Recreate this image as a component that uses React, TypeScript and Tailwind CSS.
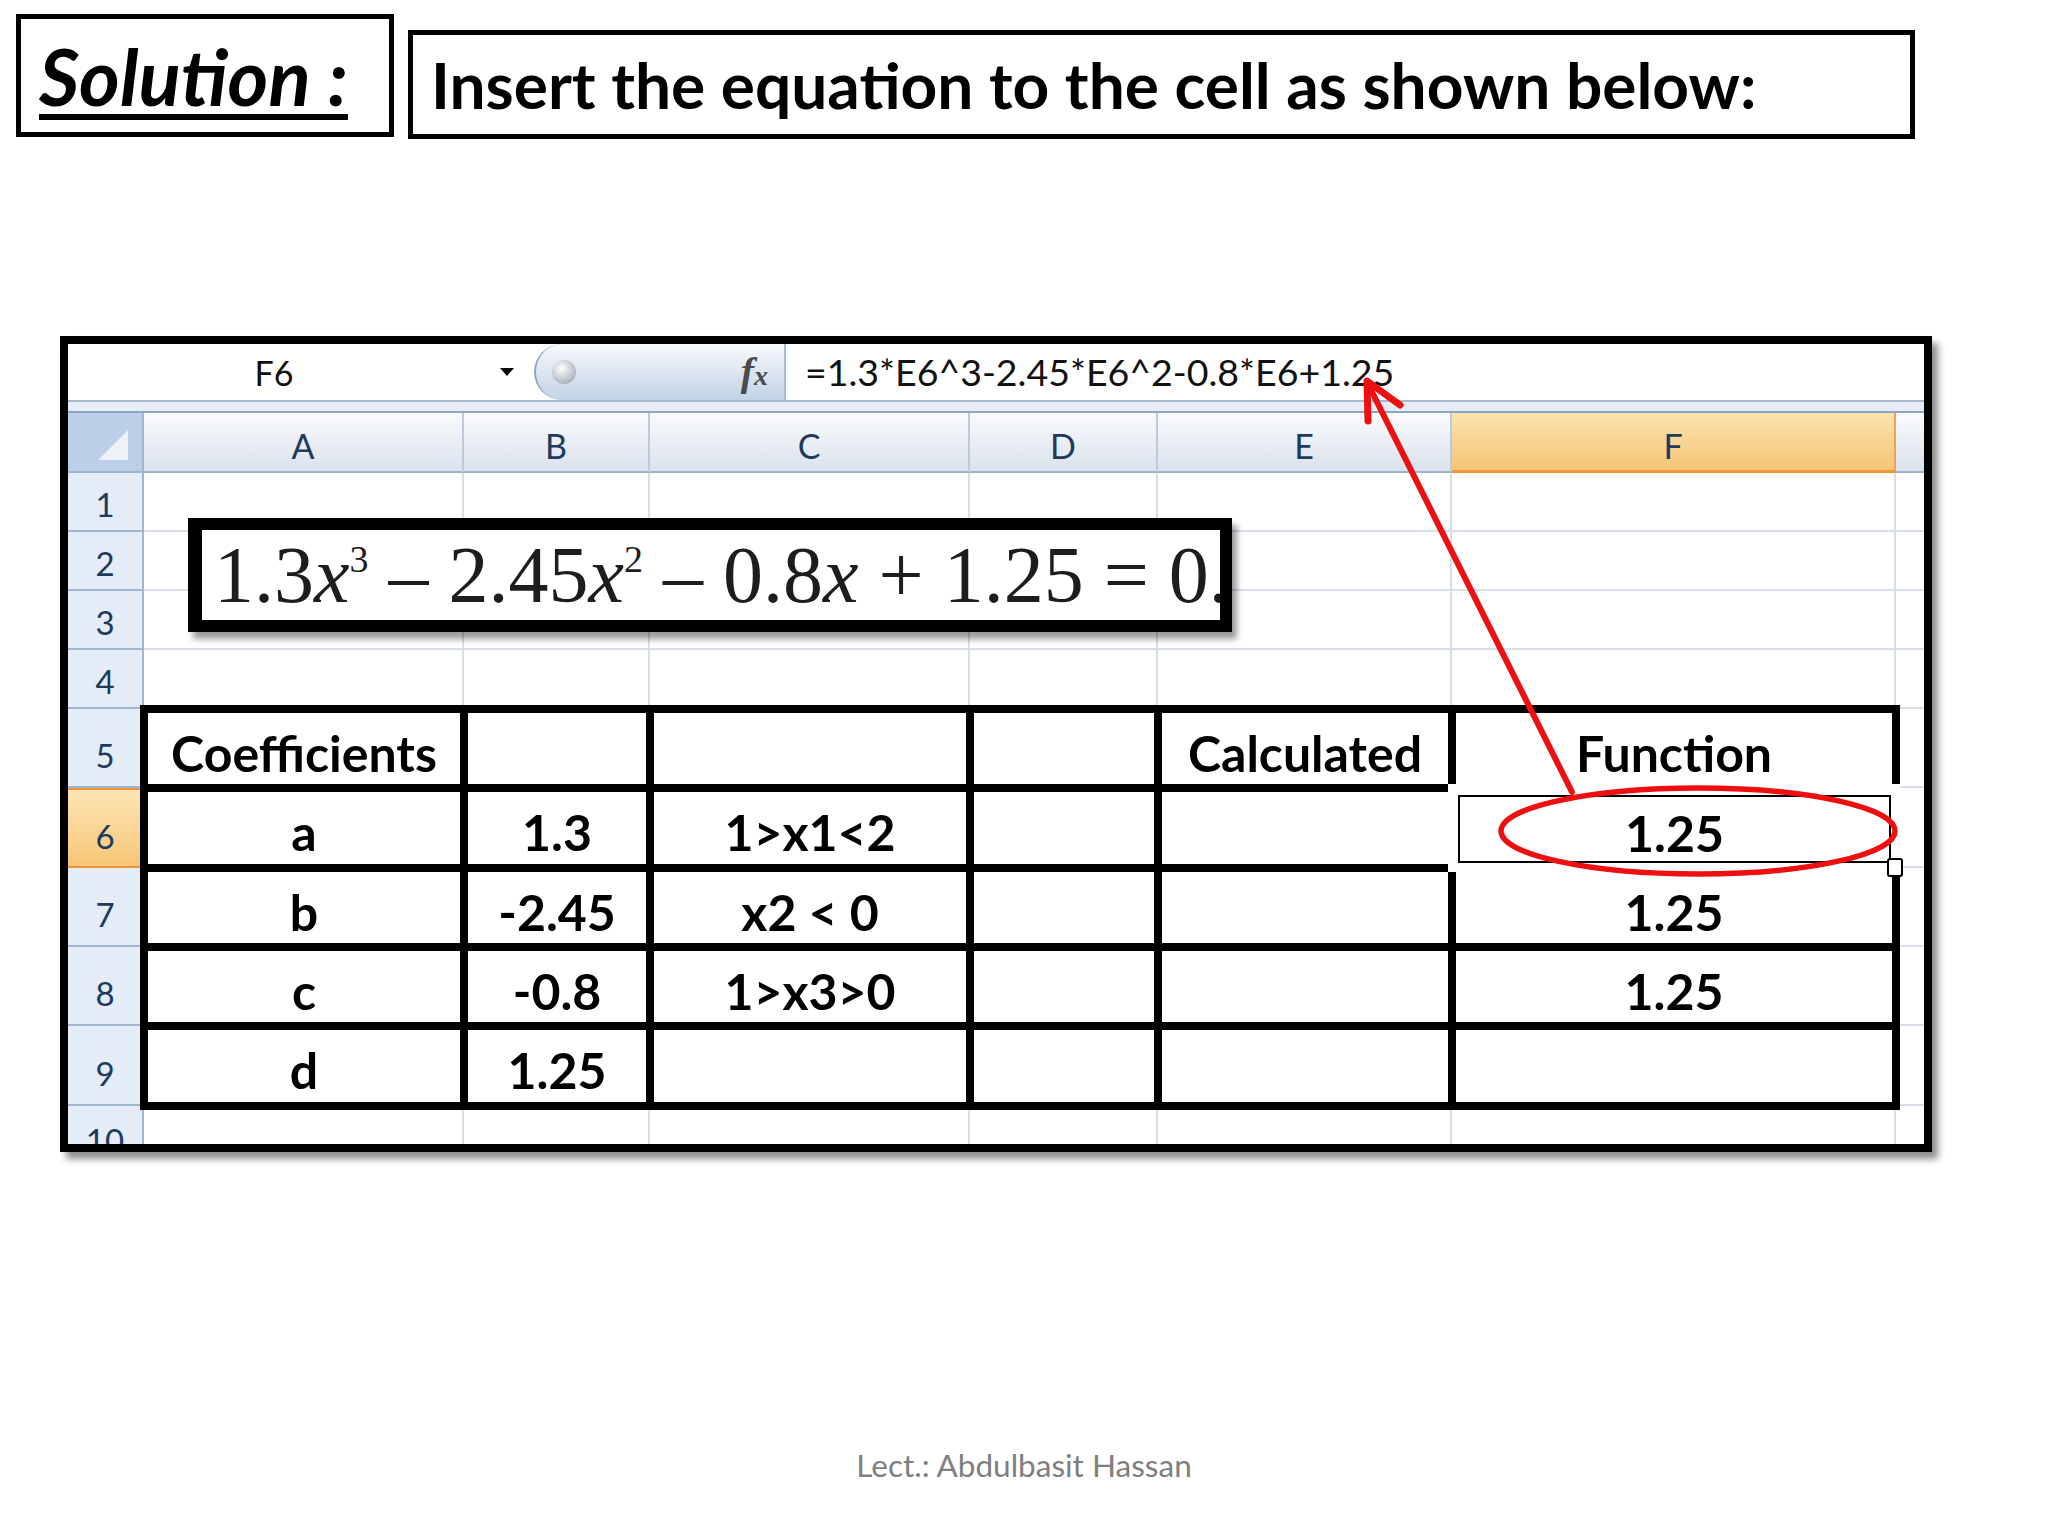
import React from "react";

const COLS = ["A", "B", "C", "D", "E", "F"];

const TABLE: string[][] = [
  ["Coefficients", "", "", "", "Calculated", "Function"],
  ["a", "1.3", "1>x1<2", "", "", "__F6__"],
  ["b", "-2.45", "x2 < 0", "", "", "1.25"],
  ["c", "-0.8", "1>x3>0", "", "", "1.25"],
  ["d", "1.25", "", "", "", ""],
];

const hdrCell =
  "flex items-center justify-center pt-[8px] border-r-2 border-b-2 border-r-[#bccadb] border-b-[#9db3cc] bg-linear-to-b from-[#fafbfd] to-[#dae2ec] text-[34px] leading-none text-[#1e3a5c]";
const hdrCellF =
  "flex items-center justify-center pt-[8px] border-r-2 border-b-[3px] border-r-[#f0a04e] border-b-[#f29436] bg-linear-to-b from-[#fbe3b0] to-[#f5c575] text-[34px] leading-none text-[#1e3a5c]";
const rowHdrSmall =
  "flex items-center justify-center pt-[6px] bg-[#e4ecf7] border-r-2 border-b-2 border-[#9eb6ce] text-[33px] leading-none text-[#1e3a5c]";
const rowHdrTall =
  "flex items-center justify-center pt-[16px] bg-[#e4ecf7] border-r-2 border-b-2 border-[#9eb6ce] text-[33px] leading-none text-[#1e3a5c]";
const rowHdrSel =
  "flex items-center justify-center pt-[16px] bg-linear-to-b from-[#fde5b4] to-[#f7c677] border-r-2 border-y-2 border-[#f29436] text-[33px] leading-none text-[#1e3a5c]";
const dataCell = "border-r-2 border-b-2 border-[#d9dfe9]";

function SheetRow({ n, table }: { n: number; table: boolean }) {
  const cls = n === 6 ? rowHdrSel : n >= 5 ? rowHdrTall : rowHdrSmall;
  return (
    <>
      <div className={cls}>{n}</div>
      {!table && COLS.map((c) => <div key={c} className={dataCell} />)}
      <div className="border-b-2 border-[#d9dfe9]" />
    </>
  );
}

export default function App() {
  return (
    <div className="relative w-[2048px] h-[1536px] bg-white overflow-hidden font-['Lato',sans-serif] text-black">
      {/* Title row */}
      <div className="flex items-start">
        <div className="ml-[16px] mt-[14px] w-[378px] h-[123px] border-[5px] border-black flex items-center pl-[18px]">
          <span className="text-[78px] font-bold italic leading-none underline decoration-[6px] underline-offset-[8px]">
            Solution :
          </span>
        </div>
        <div className="ml-[14px] mt-[30px] w-[1507px] h-[109px] border-[5px] border-black flex items-center pl-[18px]">
          <span className="text-[64px] font-bold leading-none whitespace-nowrap">
            Insert the equation to the cell as shown below:
          </span>
        </div>
      </div>

      {/* Excel screenshot frame */}
      <div className="ml-[60px] mt-[197px] w-[1872px] h-[816px] border-[8px] border-black bg-white flex flex-col shadow-[6px_7px_7px_rgba(0,0,0,0.45)]">
        {/* Formula bar */}
        <div className="h-[56px] flex items-stretch bg-white shrink-0">
          <div className="w-[412px] flex items-center justify-center text-[34px] text-[#111]">F6</div>
          <div className="w-[54px] flex items-center justify-center">
            <div className="w-0 h-0 border-l-[7px] border-r-[7px] border-t-[8px] border-l-transparent border-r-transparent border-t-black" />
          </div>
          <div className="w-[250px] rounded-l-[30px] border-l-2 border-[#8fa6c2] bg-linear-to-b from-[#f7f9fc] to-[#c2d2e6] flex items-center justify-between pl-[16px] pr-[16px]">
            <div className="w-[24px] h-[24px] rounded-full bg-[radial-gradient(circle_at_40%_35%,#ffffff,#8e98a6)]" />
            <span className="font-['Liberation_Serif',serif] italic font-bold text-[#4a4a4a] leading-none">
              <span className="text-[40px]">f</span>
              <span className="text-[28px]">x</span>
            </span>
          </div>
          <div className="flex-1 border-l-2 border-[#a9b9cd] flex items-center pl-[19px] text-[37.5px] text-[#111] whitespace-nowrap">
            =1.3*E6^3-2.45*E6^2-0.8*E6+1.25
          </div>
        </div>
        {/* separator */}
        <div className="h-[13px] shrink-0 border-t-2 border-b-2 border-t-[#a5b7cd] border-b-[#8ea5c2] bg-[#e6edf6]" />

        {/* Grid */}
        <div className="relative grid grid-cols-[76px_320px_186px_320px_188px_294px_444px_28px] grid-rows-[60px_59px_59px_59px_59px_79px_80px_79px_79px_80px_38px] overflow-hidden">
          {/* header row */}
          <div className="flex items-end justify-end pr-[14px] pb-[11px] bg-[#bbcfe9] border-r-2 border-b-2 border-[#9eb6ce]">
            <div className="w-0 h-0 border-l-[30px] border-l-transparent border-b-[30px] border-b-[#eef2f7]" />
          </div>
          {COLS.map((c) => (
            <div key={c} className={c === "F" ? hdrCellF : hdrCell}>
              {c}
            </div>
          ))}
          <div className="border-b-2 border-b-[#9db3cc] bg-linear-to-b from-[#fafbfd] to-[#dae2ec]" />

          {[1, 2, 3, 4].map((n) => (
            <SheetRow key={n} n={n} table={false} />
          ))}
          {[5, 6, 7, 8, 9].map((n) => (
            <SheetRow key={n} n={n} table={true} />
          ))}
          {/* row 10 (cut) */}
          <div className="flex justify-center items-start pt-[18px] bg-[#e4ecf7] border-r-2 border-[#9eb6ce] text-[33px] leading-none text-[#1e3a5c] overflow-hidden">
            10
          </div>
          {COLS.map((c) => (
            <div key={c} className="border-r-2 border-[#d9dfe9]" />
          ))}
          <div />

          {/* bordered table */}
          <div className="col-start-2 col-span-6 row-start-6 row-span-5 -m-[4px] z-10 bg-black p-[8px] grid grid-cols-[312px_178px_312px_180px_286px_436px] grid-rows-[71px_72px_71px_71px_72px] gap-[8px]">
            {TABLE.flatMap((row, r) =>
              row.map((v, c) =>
                v === "__F6__" ? (
                  <div
                    key={`${r}-${c}`}
                    className="relative -m-[8px] bg-white flex pl-[10px] pr-[9px] pt-[11px] pb-[9px]"
                  >
                    <div className="flex-1 border-2 border-black flex items-center justify-center pt-[8px] text-[50px] font-bold leading-none">
                      1.25
                    </div>
                    <div className="absolute left-[439px] top-[74px] w-[16px] h-[19px] border-2 border-black bg-white rounded-[3px]" />
                  </div>
                ) : (
                  <div
                    key={`${r}-${c}`}
                    className="bg-white flex items-center justify-center pt-[8px] text-[50px] font-bold leading-none whitespace-nowrap"
                  >
                    {v}
                  </div>
                )
              )
            )}
          </div>

          {/* equation picture */}
          <div className="absolute left-[120px] top-[105px] w-[1044px] h-[114px] border-[12px] border-l-[14px] border-black bg-white shadow-[5px_7px_6px_rgba(0,0,0,0.4)] z-10 overflow-hidden flex items-center pl-[12px] font-['Liberation_Serif',serif] text-[#1d1d1d] whitespace-nowrap">
            <span className="text-[80px] leading-none">
              1.3<i>x</i>
              <sup className="text-[38px] top-[-0.78em]">3</sup>
              &nbsp;– 2.45<i>x</i>
              <sup className="text-[38px] top-[-0.78em]">2</sup>
              &nbsp;– 0.8<i>x</i>&nbsp;+ 1.25 = 0.
            </span>
          </div>
        </div>
      </div>

      {/* footer */}
      <div className="mt-[293px] text-center text-[31.5px] leading-[40px] text-[#7f7f7f]">
        Lect.: Abdulbasit Hassan
      </div>

      {/* red annotations */}
      <svg
        className="absolute inset-0 pointer-events-none z-20"
        width="2048"
        height="1536"
        viewBox="0 0 2048 1536"
      >
        <ellipse cx="1698" cy="831" rx="197" ry="43" fill="none" stroke="#ee1010" strokeWidth="5.5" />
        <line x1="1572" y1="792" x2="1368" y2="384" stroke="#ee1010" strokeWidth="6" strokeLinecap="round" />
        <polyline
          points="1368,421 1367,381 1400,405"
          fill="none"
          stroke="#ee1010"
          strokeWidth="7"
          strokeLinecap="round"
          strokeLinejoin="round"
        />
      </svg>
    </div>
  );
}
